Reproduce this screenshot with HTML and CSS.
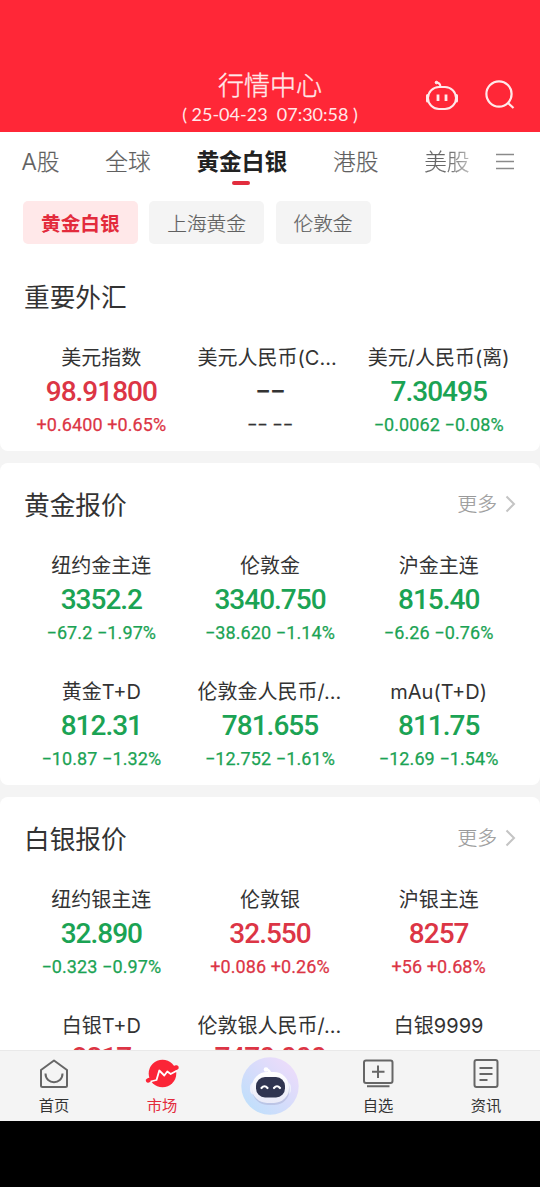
FILE: index.html
```html
<!DOCTYPE html>
<html lang="zh-CN">
<head>
<meta charset="utf-8">
<title>行情中心</title>
<link rel="stylesheet" href="styles.css">
</head>
<body>
<div class="app">
  <header class="header">
    <div class="heading">
      <h1>行情中心</h1>
      <p>( 25-04-23&nbsp; 07:30:58 )</p>
    </div>
    <div class="actions">
      <svg width="36" height="34" viewBox="0 0 36 34" fill="none" stroke="#ffe9ea" stroke-width="2">
        <rect x="4" y="8" width="28" height="22" rx="11"/>
        <path d="M16.500 8q-.2-4.500-4.500-4.500" stroke-linecap="round"/><circle cx="12.500" cy="3.500" r="1.300" fill="#ffe9ea" stroke-width="1"/>
        <path d="M3.500 16.500v5.500M32.500 16.500v5.500" stroke-width="3" stroke-linecap="round"/>
        <path d="M14 15.500v6.500M22 15.500v6.500" stroke-width="2.800"/>
      </svg>
      <svg width="32" height="32" viewBox="0 0 32 32" fill="none" stroke="#ffe9ea" stroke-width="2.200"><circle cx="15" cy="15" r="12.600"/><path d="M24 24l5.500 5"/></svg>
    </div>
  </header>
  <nav class="tabs">
    <div class="tab-list"><span>A股</span><span>全球</span><span class="active">黄金白银</span><span>港股</span><span class="faded">美股</span></div>
    <svg class="menu" width="18" height="17" viewBox="0 0 18 17" stroke="#8a8a8a" stroke-width="1.300"><path d="M0 1.500h18M0 8.500h18M0 15.500h18"/></svg>
  </nav>
  <div class="chips"><span class="chip selected">黄金白银</span><span class="chip">上海黄金</span><span class="chip">伦敦金</span></div>
  <main class="content">
    <section class="card first">
      <div class="title"><h2>重要外汇</h2></div>
      <div class="grid">
        <div class="quote up"><h3>美元指数</h3><b>98.91800</b><p>+0.6400 +0.65%</p></div>
        <div class="quote flat"><h3 class="clip">美元人民币(C...</h3><b>−−</b><p>−− −−</p></div>
        <div class="quote down"><h3>美元/人民币(离)</h3><b>7.30495</b><p>−0.0062 −0.08%</p></div>
      </div>
    </section>
    <section class="card">
      <div class="title"><h2>黄金报价</h2><span class="more">更多<svg width="11" height="18" viewBox="0 0 11 18" fill="none" stroke="#c4c4c4" stroke-width="2"><path d="M1.500 1.500L9 9l-7.500 7.500"/></svg></span></div>
      <div class="grid">
        <div class="quote down"><h3>纽约金主连</h3><b>3352.2</b><p>−67.2 −1.97%</p></div>
        <div class="quote down"><h3>伦敦金</h3><b>3340.750</b><p>−38.620 −1.14%</p></div>
        <div class="quote down"><h3>沪金主连</h3><b>815.40</b><p>−6.26 −0.76%</p></div>
        <div class="quote down"><h3>黄金T+D</h3><b>812.31</b><p>−10.87 −1.32%</p></div>
        <div class="quote down"><h3 class="clip">伦敦金人民币/...</h3><b>781.655</b><p>−12.752 −1.61%</p></div>
        <div class="quote down"><h3>mAu(T+D)</h3><b>811.75</b><p>−12.69 −1.54%</p></div>
      </div>
    </section>
    <section class="card">
      <div class="title"><h2>白银报价</h2><span class="more">更多<svg width="11" height="18" viewBox="0 0 11 18" fill="none" stroke="#c4c4c4" stroke-width="2"><path d="M1.500 1.500L9 9l-7.500 7.500"/></svg></span></div>
      <div class="grid">
        <div class="quote down"><h3>纽约银主连</h3><b>32.890</b><p>−0.323 −0.97%</p></div>
        <div class="quote up"><h3>伦敦银</h3><b>32.550</b><p>+0.086 +0.26%</p></div>
        <div class="quote up"><h3>沪银主连</h3><b>8257</b><p>+56 +0.68%</p></div>
        <div class="quote up partial"><h3>白银T+D</h3><b>8217</b></div>
        <div class="quote up partial"><h3 class="clip">伦敦银人民币/...</h3><b>7470.000</b></div>
        <div class="quote up"><h3>白银9999</h3></div>
      </div>
    </section>
  </main>
  <footer class="bottom">
    <div class="item"><svg width="32" height="32" viewBox="0 0 32 32" fill="none" stroke="#666" stroke-width="2"><path d="M3 12L16 2.500 29 12v15.500q0 1.500-1.500 1.500h-23Q3 29 3 27.500z" stroke-linejoin="round"/><path d="M7.500 15.500c0 11.500 17 11.500 17 0"/></svg>首页</div>
    <div class="item current"><svg width="36" height="32" viewBox="0 0 36 32"><circle cx="18.500" cy="15.500" r="13.800" fill="#fb2537"/><path d="M4 22.500l5-2M28 11l4.500-1.500" stroke="#fb2537" stroke-width="4.500" stroke-linecap="round"/><path d="M6.500 23.500l6-1.500 2.800-9.500 5 5 3-4 3.400 2.500 6-3.300" fill="none" stroke="#fff" stroke-width="1.800" stroke-linejoin="round"/></svg>市场</div>
    <div class="item bot"><svg width="58" height="58" viewBox="0 0 58 58">
      <defs>
        <linearGradient id="halo" x1="0" y1="1" x2="1" y2="0"><stop offset="0" stop-color="#b9e0fb"/><stop offset=".5" stop-color="#d6dcfb"/><stop offset="1" stop-color="#f3dcfa"/></linearGradient>
        <linearGradient id="shell" x1="0" y1="0" x2="0" y2="1"><stop offset="0" stop-color="#fff"/><stop offset="1" stop-color="#e9eaf8"/></linearGradient>
      </defs>
      <circle cx="29" cy="29" r="28.700" fill="url(#halo)"/>
      <path d="M29 17q0-4-4-4.500" stroke="#fff" stroke-width="2.500" fill="none"/><circle cx="25" cy="12.500" r="2.300" fill="#fff"/>
      <rect x="9" y="25" width="41" height="13" rx="5" fill="#eef0fc"/>
      <rect x="11.500" y="17" width="37" height="31" rx="15" fill="#aaaed1" opacity=".5"/>
      <rect x="11" y="15" width="37" height="31" rx="15" fill="url(#shell)"/>
      <rect x="15" y="20" width="29" height="20.500" rx="9" fill="#303550"/>
      <path d="M20.500 31q3-3.500 6 0M33 31q3-3.500 6 0" fill="none" stroke="#fff" stroke-width="2.200" stroke-linecap="round"/>
    </svg></div>
    <div class="item"><svg width="32" height="32" viewBox="0 0 32 32" fill="none" stroke="#666" stroke-width="2"><rect x="2" y="2.500" width="28.500" height="22.500" rx="2"/><path d="M16 7.500v12.500M10 13.700h12.500M5 28.300h22.500"/></svg>自选</div>
    <div class="item"><svg width="32" height="32" viewBox="0 0 32 32" fill="none" stroke="#666" stroke-width="2"><rect x="4.500" y="2" width="23" height="27" rx="2"/><path d="M9.500 10h13M9.500 16h13M9.500 22h8"/></svg>资讯</div>
  </footer>
</div>
</body>
</html>
```
FILE: styles.css
```css
* { box-sizing: border-box; }
body { margin: 0; background: #000; font-family: Inter, "Noto Sans CJK SC", sans-serif; color: #333; }
h1, h2, h3, p { margin: 0; font-weight: 400; }
svg { display: block; flex: none; }
.app { height: 1187px; display: flex; flex-direction: column; overflow: hidden; padding-bottom: 66px; }
.header { height: 132px; flex: none; background: #ff2737; color: #ffe9ea; display: grid; grid-template-columns: 120px 300px 120px; padding-top: 70px; }
.heading { grid-column: 2; text-align: center; white-space: nowrap; }
.heading h1 { font-size: 26px; line-height: 32px; height: 30px; font-weight: 300; -webkit-text-stroke: .35px #ffe9ea; }
.heading p { font: 400 18px/28px Lato, sans-serif; }
.actions { display: flex; gap: 24px; padding: 9px 0 0 4px; }
.tabs { height: 60px; flex: none; background: #fff; display: flex; align-items: center; padding: 0 26px 0 21.5px; justify-content: space-between; }
.tab-list { display: flex; gap: 45.8px; font-size: 22.7px; line-height: 60px; color: #606060; font-weight: 300; -webkit-text-stroke: .2px; white-space: nowrap; }
.tab-list .active { color: #222; font-weight: 700; -webkit-text-stroke: 0; position: relative; }
.tab-list .active::after { content: ""; position: absolute; left: 50%; top: 49px; width: 18px; height: 4px; margin-left: -9.5px; border-radius: 2px; background: #e22d3e; }
.faded { background: linear-gradient(90deg, #666 50%, #bbb); background-clip: text; color: transparent; }
.menu { margin-bottom: 2px; }
.chips { height: 69px; flex: none; background: #fff; display: flex; gap: 11.5px; padding: 9px 23px 17px; }
.chip { height: 43px; padding: 0 18px; border-radius: 5px; background: #f4f4f4; font-size: 19.7px; line-height: 46px; color: #606060; font-weight: 300; -webkit-text-stroke: .2px; white-space: nowrap; }
.chip.selected { background: #ffe8e9; color: #e32b3c; font-weight: 700; -webkit-text-stroke: 0; }
.content { flex: 1; min-height: 0; overflow: hidden; background: #f4f4f4; display: flex; flex-direction: column; gap: 12px; }
.card { flex: none; background: #fff; border-radius: 8px; padding: 18px 17px 8px; }
.card.first { border-radius: 0 0 8px 8px; height: 190px; padding-top: 12px; }
.title { display: flex; justify-content: space-between; align-items: center; height: 48px; padding: 0 7px; }
.title h2 { font-size: 25.7px; line-height: 48px; padding-top: 2px; }
.more { display: flex; align-items: center; gap: 8px; font-size: 19.8px; line-height: 30px; font-weight: 300; -webkit-text-stroke: .2px; color: #999; margin-top: -2px; }
.grid { display: grid; grid-template-columns: repeat(3, 1fr); row-gap: 24px; padding-top: 20px; }
.quote { text-align: center; white-space: nowrap; height: 102px; }
.quote h3 { font-size: 20px; line-height: 34px; color: #333; }
.quote h3.clip { width: 145px; margin: 0 auto; text-align: left; }
.quote b { display: block; font: 500 28px/34px Roboto, sans-serif; letter-spacing: -1px; }
.quote p { font: 400 18px/32px Roboto, sans-serif; letter-spacing: .1px; -webkit-text-stroke: .25px; }
.quote.partial b { line-height: 30px; }
.up { color: #dc3545; }
.down { color: #1ba354; }
.flat { color: #333; }
.bottom { height: 71px; flex: none; background: #f4f4f4; border-top: 1px solid #e9e9e9; display: grid; grid-template-columns: repeat(5, 1fr); }
.item { display: flex; flex-direction: column; align-items: center; font-size: 15.3px; line-height: 22px; padding-top: 7px; gap: 5px; }
.item.current { color: #e32b3c; }
.item.bot { padding-top: 6px; }
```
